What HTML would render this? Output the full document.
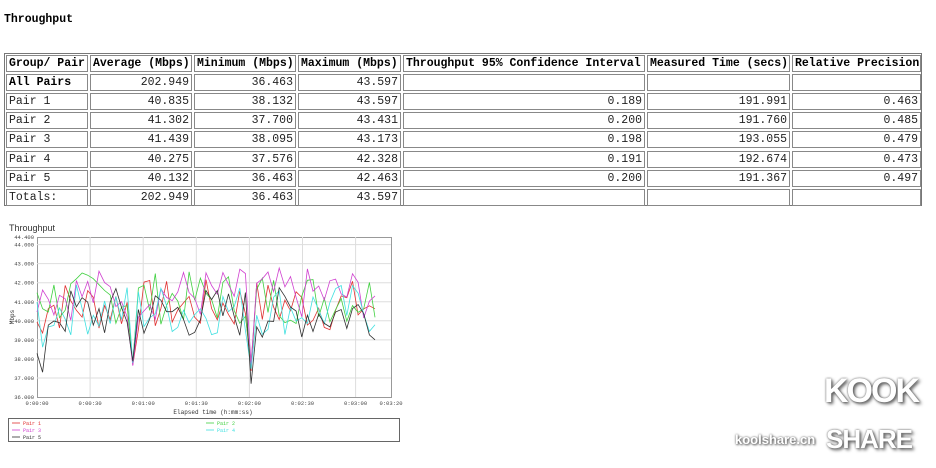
<!DOCTYPE html>
<html><head><meta charset="utf-8"><style>
body{margin:0;width:936px;height:468px;background:#fff;position:relative;overflow:hidden;font-family:"Liberation Mono","Noto Sans CJK SC",monospace;font-size:11.5px;color:#000}
.t{position:absolute;left:4px;top:53px;width:918px;height:153px;border:1px solid #777;box-sizing:border-box}
.c{position:absolute;border:1px solid #888;box-sizing:border-box;height:17px;line-height:16px;padding:0 2px;white-space:nowrap;overflow:hidden;color:#222}
.b{font-weight:bold;color:#000}
.r{text-align:right}
</style></head><body>
<div style="position:absolute;left:4px;top:13px;font-weight:bold;font-size:11.5px">Throughput</div>
<div class="t"></div>
<div id="tb"></div>
<svg id="ch" width="936" height="468" style="position:absolute;left:0;top:0" xmlns="http://www.w3.org/2000/svg"></svg>
<div style="position:absolute;left:735px;top:432px;font:bold 13px 'Liberation Sans',sans-serif;color:#fff;text-shadow:0 0 2px #666,1px 1px 2px #555">koolshare.cn</div>
<div style="position:absolute;left:824px;top:372px;font:bold 34px 'Liberation Sans',sans-serif;color:#fff;text-shadow:0 0 2px #555,2px 2px 3px #666;letter-spacing:-2px">KOOK</div>
<div style="position:absolute;left:826px;top:424px;font:bold 26px 'Liberation Sans',sans-serif;color:#fff;text-shadow:0 0 2px #555,2px 2px 3px #666;letter-spacing:-1px">SHARE</div>
<script>
var cols=[6,90,194,298,403,647,792,923];
var rows=[["Group/ Pair","Average (Mbps)","Minimum (Mbps)","Maximum (Mbps)","Throughput 95% Confidence Interval","Measured Time (secs)","Relative Precision"],
["All Pairs","202.949","36.463","43.597","","",""],
["Pair 1","40.835","38.132","43.597","0.189","191.991","0.463"],
["Pair 2","41.302","37.700","43.431","0.200","191.760","0.485"],
["Pair 3","41.439","38.095","43.173","0.198","193.055","0.479"],
["Pair 4","40.275","37.576","42.328","0.191","192.674","0.473"],
["Pair 5","40.132","36.463","42.463","0.200","191.367","0.497"],
["Totals:","202.949","36.463","43.597","","",""]];
var h="";
for(var i=0;i<8;i++){for(var j=0;j<7;j++){var y=55+i*19.1;
var cls="c"+(i<2&&(i==0||j==0)?" b":"")+(i>0&&j>0?" r":"");
h+='<div class="'+cls+'" style="left:'+cols[j]+'px;top:'+y+'px;width:'+(cols[j+1]-cols[j]-2)+'px">'+rows[i][j]+'</div>';}}
document.getElementById('tb').innerHTML=h;
var s='<text x="9" y="231" font-family="Liberation Sans" font-size="9" fill="#333">Throughput</text>';
s+='<rect x="37.5" y="237.5" width="354" height="160" fill="#fff" stroke="#999"/>';
var ylab=[[36,"36.000"],[37,"37.000"],[38,"38.000"],[39,"39.000"],[40,"40.000"],[41,"41.000"],[42,"42.000"],[43,"43.000"],[44,"44.000"],[44.4,"44.400"]];
function Y(v){return 397-(v-36)*19.05;}
ylab.forEach(function(l){var y=Y(l[0]);if(l[0]>36&&l[0]<44.4)s+='<line x1="37" x2="391" y1="'+y+'" y2="'+y+'" stroke="#ddd"/>';s+='<text x="34" y="'+(y+2)+'" font-size="5.5" text-anchor="end" fill="#444" font-family="Liberation Mono">'+l[1]+'</text>';});
var xl=["0:00:00","0:00:30","0:01:00","0:01:30","0:02:00","0:02:30","0:03:00","0:03:20"];
for(var k=0;k<8;k++){var x=37+k*53.1;if(k==7)x=391;if(k>0&&k<7)s+='<line x1="'+x+'" x2="'+x+'" y1="237" y2="397" stroke="#ddd"/>';s+='<text x="'+x+'" y="405" font-size="5.5" text-anchor="middle" fill="#444" font-family="Liberation Mono">'+xl[k]+'</text>';}
s+='<text x="213" y="414" font-size="6" text-anchor="middle" fill="#333" font-family="Liberation Mono">Elapsed time (h:mm:ss)</text>';
s+='<text x="14" y="317" font-size="6" fill="#333" transform="rotate(-90 14 317)" text-anchor="middle" font-family="Liberation Mono">Mbps</text>';
var seed=7;function rnd(){seed=(seed*9301+49297)%233280;return seed/233280;}
var colors=["#e03030","#40d040","#d040d0","#40e0e0","#303030"];
colors.forEach(function(c,ci){var p=[];var N=60;for(var t=0;t<=N;t++){var x=37+t*(338/N);var v=40.8+(rnd()-0.5)*2.8+(ci==1?0.4:0)+(ci==2?0.6:0)-(ci==4?0.4:0)-(ci==3?0.2:0);
if(t<2)v-=1.5*rnd();if(t==17)v=37.6+rnd()*0.5;if(t==38)v=37.3+rnd()*0.8-(ci==4?0.8:0);if(t==1&&ci==4)v=37.3;
p.push(x.toFixed(1)+","+Y(v).toFixed(1));}
s+='<polyline points="'+p.join(" ")+'" fill="none" stroke="'+c+'" stroke-width="0.8"/>';});
s+='<rect x="8.5" y="418.5" width="391" height="23" fill="none" stroke="#666"/>';
var lg=[[12,423,"#e03030","Pair 1"],[12,430,"#d040d0","Pair 3"],[12,437,"#303030","Pair 5"],[206,423,"#40d040","Pair 2"],[206,430,"#40e0e0","Pair 4"]];
lg.forEach(function(l){s+='<line x1="'+l[0]+'" x2="'+(l[0]+8)+'" y1="'+l[1]+'" y2="'+l[1]+'" stroke="'+l[2]+'" stroke-width="0.8"/><text x="'+(l[0]+11)+'" y="'+(l[1]+2)+'" font-size="5" fill="'+l[2]+'" font-family="Liberation Mono">'+l[3]+'</text>';});
document.getElementById('ch').innerHTML=s;
</script>
</body></html>
